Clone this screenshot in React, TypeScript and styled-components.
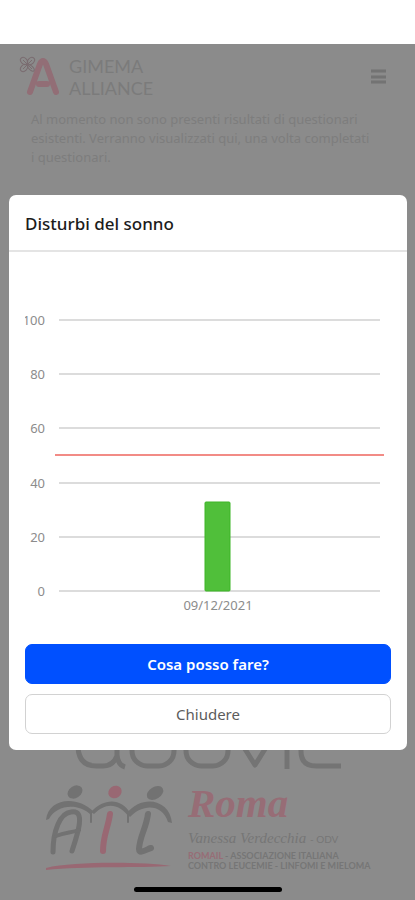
import React from "react";
import styled, { createGlobalStyle } from "styled-components";

const GlobalStyle = createGlobalStyle`
  *, *::before, *::after { box-sizing: border-box; }
  body { margin: 0; background: #8b8b8b; font-family: "Noto Sans", "Open Sans", sans-serif; }
  button { font: inherit; cursor: pointer; }
`;

const Screen = styled.div`
  position: relative;
  display: flex;
  flex-direction: column;
  min-height: 100vh;
  background: #8b8b8b;
`;

const StatusBar = styled.div`
  height: 44px;
  background: #ffffff;
`;

const Page = styled.main`
  flex: 1;
  display: flex;
  flex-direction: column;
`;

const TopBar = styled.header`
  display: flex;
  align-items: center;
  justify-content: space-between;
  padding: 9px 28px 0 19px;
  height: 56px;
`;

const Brand = styled.a`
  display: flex;
  align-items: center;
  gap: 9px;
  color: #7b7b7b;
  text-decoration: none;
`;

const BrandName = styled.span`
  display: flex;
  flex-direction: column;
  font: 400 18px/22px Lato, sans-serif;
`;

const MenuButton = styled.button`
  display: flex;
  padding: 0;
  border: 0;
  background: none;
  color: #737373;
`;

const Notice = styled.p`
  margin: 10px 24px 0 31px;
  font-size: 13px;
  line-height: 19px;
  color: #7d7d7d;
`;

const Sponsors = styled.footer`
  margin-top: auto;
  padding: 0 40px 0 45px;
`;

const AilRow = styled.div`
  display: flex;
  gap: 14px;
  margin-top: 9px;
`;

const AilText = styled.div`
  display: flex;
  flex-direction: column;
  white-space: nowrap;
  color: #767676;
`;

const City = styled.span`
  font: italic 700 41px/44px "Liberation Serif", serif;
  color: #976d76;
`;

const Dedication = styled.span`
  font: italic 400 15px/26px "Liberation Serif", serif;
`;

const Suffix = styled.span`
  font: 400 10px/20px Lato, sans-serif;
`;

const Small = styled.span`
  font: 700 9px/10px Lato, sans-serif;
`;

const Red = styled.span`
  color: #976d76;
`;

const HomeIndicator = styled.div`
  width: 148px;
  height: 5px;
  margin: 14px auto 8px;
  border-radius: 3px;
  background: #000000;
`;

const Overlay = styled.div`
  position: absolute;
  inset: 44px 0 0;
  display: flex;
  align-items: center;
  justify-content: center;
  padding: 0 8px 0 9px;
`;

const Dialog = styled.section`
  width: 100%;
  border-radius: 7px;
  background: #ffffff;
`;

const DialogTitle = styled.h2`
  margin: 0;
  padding: 16px 16px 14px;
  border-bottom: 2px solid #e4e4e4;
  font-size: 17px;
  line-height: 25px;
  font-weight: 500;
  color: #1c1c1c;
`;

const Chart = styled.svg`
  display: block;
  width: 100%;
  padding: 0 16px;
  font-size: 13px;
  fill: #8c8c8c;
`;

const Actions = styled.div`
  display: flex;
  flex-direction: column;
  gap: 10px;
  padding: 16px;
`;

const ActionButton = styled.button<{ $primary?: boolean }>`
  height: 40px;
  border: 1px solid ${(p) => (p.$primary ? "#0050ff" : "#d2d2d2")};
  border-radius: 7px;
  background: ${(p) => (p.$primary ? "#0050ff" : "#ffffff")};
  color: ${(p) => (p.$primary ? "#ffffff" : "#5c5c5c")};
  font-size: 15px;
  font-weight: ${(p) => (p.$primary ? 600 : 400)};
`;

const DoovieMark = styled.svg`
  display: block;
`;

const ticks = [100, 80, 60, 40, 20, 0];
const results = [{ date: "09/12/2021", value: 33 }];
const threshold = 50;
const yOf = (value: number) => 339 - Math.round(value * 2.71);

function BrandMark() {
  return (
    <svg width="41" height="42" viewBox="0 0 41 42" fill="none" aria-hidden="true">
      <path d="M11 36 L21 8 Q24 2 27 8 L37 36 M20 28 H28" stroke="#926e76" strokeWidth="6" strokeLinecap="round" strokeLinejoin="round" />
      <g stroke="#7a6c70" strokeWidth="1">
        <ellipse cx="5" cy="5" rx="4" ry="3" transform="rotate(45 5 5)" />
        <ellipse cx="12" cy="5" rx="4" ry="3" transform="rotate(-45 12 5)" />
        <ellipse cx="5" cy="12" rx="4" ry="3" transform="rotate(-45 5 12)" />
        <ellipse cx="12" cy="12" rx="4" ry="2" transform="rotate(45 12 12)" />
        <path d="M4 4 L13 13 M13 4 L4 13" />
      </g>
    </svg>
  );
}

function DoovieLogo() {
  return (
    <DoovieMark width="300" height="44" viewBox="45 728 300 44" fill="none" stroke="#747474" strokeWidth="5" aria-label="doovie" role="img">
      <path d="M117 733 H94 Q78 733 78 747 Q79 766 96 766 H103 Q113 766 117 756 V733 M117 755 Q118 765 125 767" />
      <rect x="132" y="731" width="42" height="35" rx="15" />
      <rect x="186" y="731" width="42" height="35" rx="15" />
      <path d="M235 733 L255 765 L275 733" strokeLinejoin="round" />
      <path d="M287 733 V769" />
      <path d="M341 766 H316 Q301 766 301 751 V747 Q301 731 315 731 H326 Q338 731 338 739 V746 H301" />
    </DoovieMark>
  );
}

function AilLogo() {
  return (
    <svg width="129" height="92" viewBox="45 780 129 92" fill="none" strokeLinecap="round" role="img" aria-label="AIL">
      <g fill="#727272">
        <ellipse cx="75" cy="791" rx="8" ry="6" transform="rotate(-32 75 791)" />
        <ellipse cx="155" cy="792" rx="9" ry="6" transform="rotate(-32 155 792)" />
        <path d="M46 819 C48 797 77 794 93 810 L91 814 C78 801 56 804 49 818 Z" />
        <path d="M91 811 C105 796 122 798 130 812 L129 816 C118 801 105 802 94 813 Z" />
        <path d="M127 812 C142 793 170 798 172 822 L168 821 C162 802 142 803 130 816 Z" />
      </g>
      <ellipse cx="115" cy="791" rx="7" ry="6" transform="rotate(-35 115 791)" fill="#996873" />
      <path d="M53 851 C53 830 60 812 71 811 C86 808 78 832 72 850" stroke="#727272" strokeWidth="5" />
      <path d="M56 835 C65 831 71 832 79 829" stroke="#727272" strokeWidth="4" />
      <path d="M91 812 V821 M128 814 V821" stroke="#727272" strokeWidth="2" />
      <path d="M110 813 C108 827 103 835 103 850" stroke="#996873" strokeWidth="6" />
      <path d="M148 813 C146 828 140 834 139 848 C139 854 147 848 151 847" stroke="#727272" strokeWidth="6" />
      <path d="M46 867 C75 860 145 861 171 865 C140 867 84 865 46 869 Z" fill="#996873" />
    </svg>
  );
}

function ResultsChart() {
  return (
    <Chart viewBox="0 0 366 376" role="img" aria-label="Disturbi del sonno: 33 il 09/12/2021">
      {ticks.map((t) => (
        <g key={t}>
          <text x="20" y={yOf(t) + 5} textAnchor="end">{t}</text>
          <line x1="34" x2="355" y1={yOf(t)} y2={yOf(t)} stroke="#dcdcdc" strokeWidth="2" />
        </g>
      ))}
      <line x1="30" x2="359" y1={yOf(threshold)} y2={yOf(threshold)} stroke="#f28b86" strokeWidth="2" />
      {results.map((r) => (
        <g key={r.date}>
          <rect x="180" y={yOf(r.value)} width="25" height={yOf(0) - yOf(r.value)} rx="1" fill="#50bf3a" stroke="#3db526" />
          <text x="193" y="358" textAnchor="middle">{r.date}</text>
        </g>
      ))}
    </Chart>
  );
}

export default function App() {
  return (
    <>
      <GlobalStyle />
      <Screen>
        <StatusBar />
        <Page>
          <TopBar>
            <Brand href="#">
              <BrandMark />
              <BrandName>
                <span>GIMEMA</span>
                <span>ALLIANCE</span>
              </BrandName>
            </Brand>
            <MenuButton aria-label="Menu">
              <svg width="17" height="16" viewBox="0 0 17 16" stroke="currentColor" strokeWidth="3">
                <path d="M1 2 H16 M1 8 H16 M1 13 H16" />
              </svg>
            </MenuButton>
          </TopBar>
          <Notice>
            Al momento non sono presenti risultati di questionari<br />
            esistenti. Verranno visualizzati qui, una volta completati<br />
            i questionari.
          </Notice>
          <Sponsors>
            <DoovieLogo />
            <AilRow>
              <AilLogo />
              <AilText>
                <City>Roma</City>
                <Dedication>Vanessa Verdecchia <Suffix>- ODV</Suffix></Dedication>
                <Small><Red>ROMAIL</Red> - ASSOCIAZIONE ITALIANA</Small>
                <Small>CONTRO LEUCEMIE - LINFOMI E MIELOMA</Small>
              </AilText>
            </AilRow>
          </Sponsors>
          <HomeIndicator />
        </Page>
        <Overlay>
          <Dialog role="dialog" aria-modal="true" aria-labelledby="dialog-title">
            <DialogTitle id="dialog-title">Disturbi del sonno</DialogTitle>
            <ResultsChart />
            <Actions>
              <ActionButton $primary>Cosa posso fare?</ActionButton>
              <ActionButton>Chiudere</ActionButton>
            </Actions>
          </Dialog>
        </Overlay>
      </Screen>
    </>
  );
}
